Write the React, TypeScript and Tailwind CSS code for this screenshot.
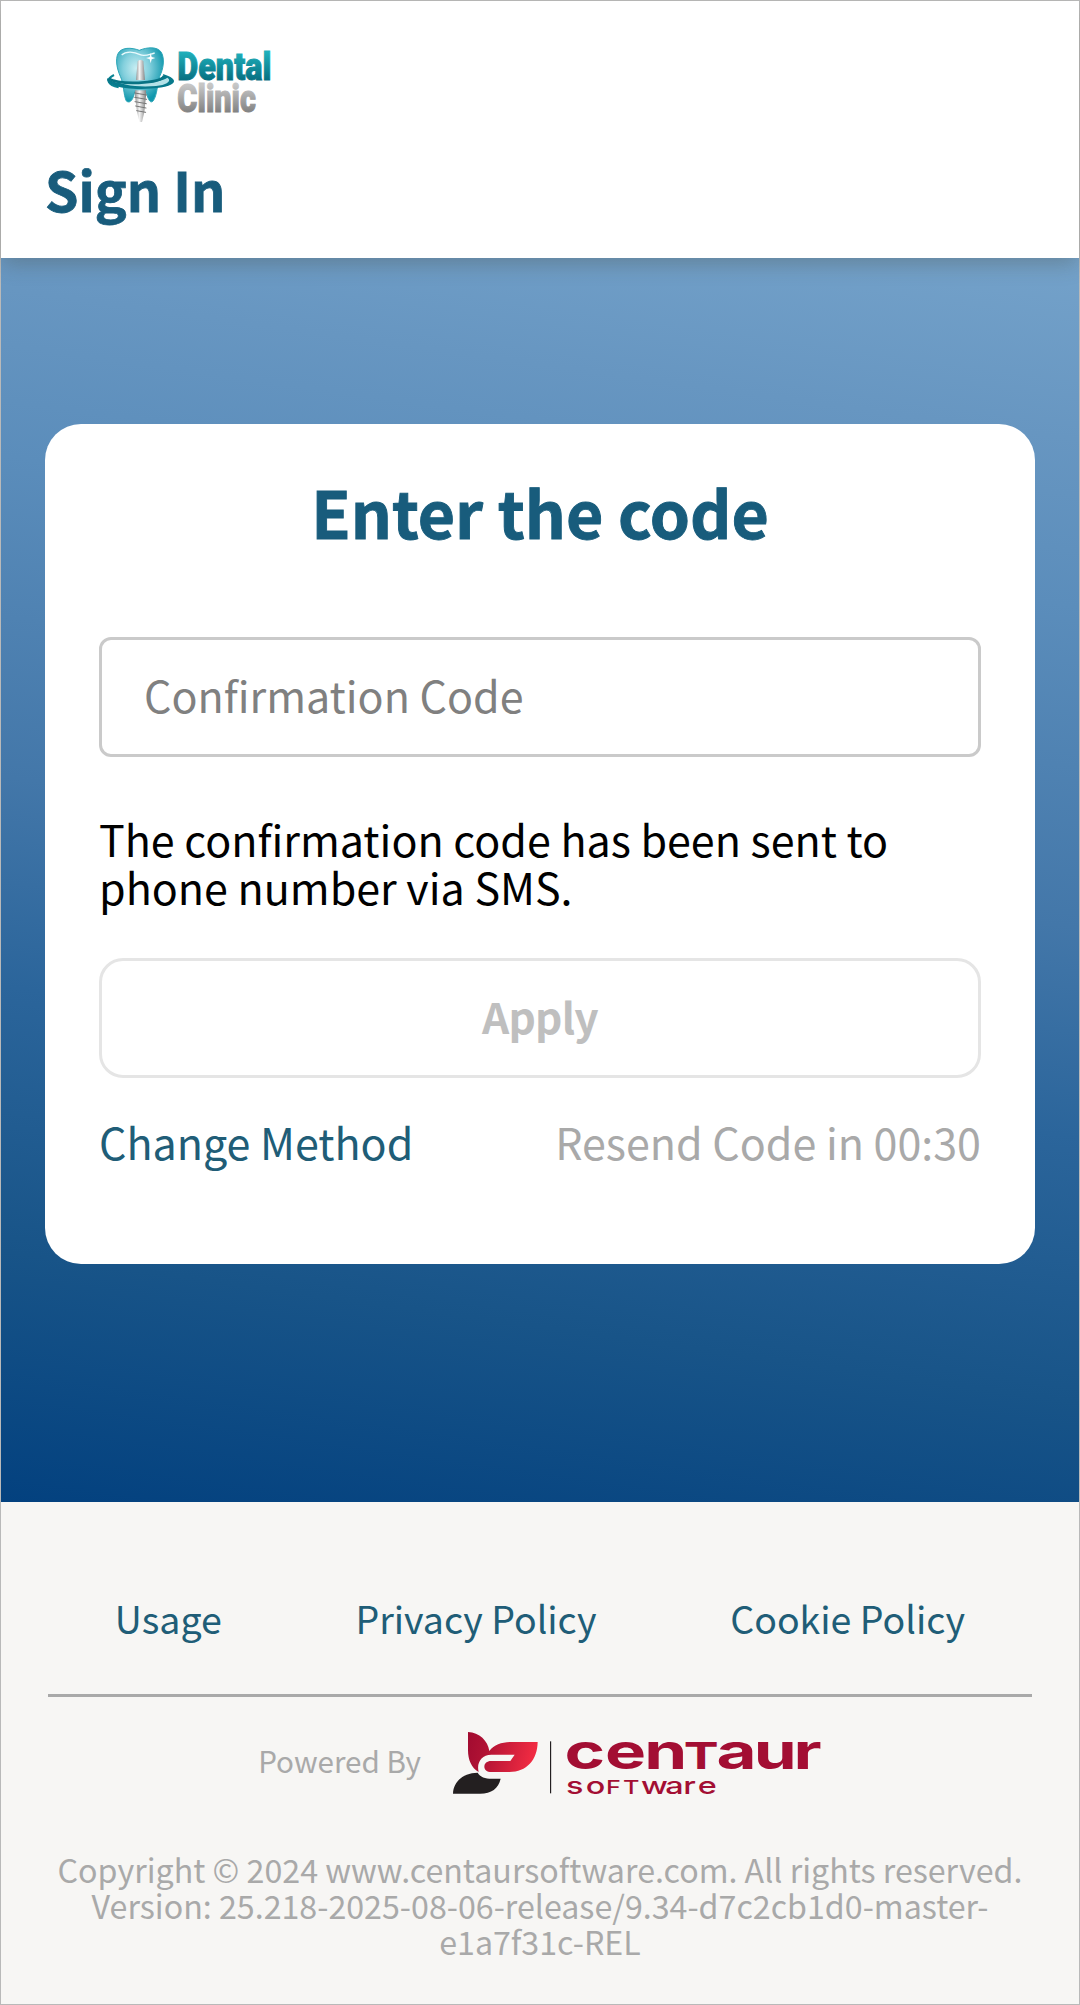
import React, { useState } from 'react';

const FOOTER_LINKS = ['Usage', 'Privacy Policy', 'Cookie Policy'];

function ClinicLogo() {
  return (
    <svg className="block w-[165px] h-[76px] overflow-visible" viewBox="48 52 495 228" role="img" aria-label="Dental Clinic">
      <defs>
        <linearGradient id="teal" x1="0" y1="0" x2="0" y2="1">
          <stop offset="0.2" stopColor="#1fb0bb" />
          <stop offset="0.85" stopColor="#056a7c" />
        </linearGradient>
        <linearGradient id="silver" x1="0" y1="0" x2="0" y2="1">
          <stop offset="0.2" stopColor="#c6c6c6" />
          <stop offset="0.85" stopColor="#7d7d7d" />
        </linearGradient>
        <radialGradient id="tooth" cx="0.42" cy="0.38" r="0.62">
          <stop offset="0" stopColor="#c9eef3" />
          <stop offset="0.45" stopColor="#84d0dd" />
          <stop offset="1" stopColor="#1097ad" />
        </radialGradient>
        <linearGradient id="screw" x1="0" y1="0" x2="1" y2="0">
          <stop offset="0" stopColor="#959595" />
          <stop offset="0.4" stopColor="#f4f4f4" />
          <stop offset="1" stopColor="#858585" />
        </linearGradient>
      </defs>
      <path d="M72 136 C44 150 54 166 86 173" fill="none" stroke="#0c8594" strokeWidth="6" />
      <path
        d="M84 72 C94 52 124 53 148 62 C172 52 202 50 214 68 C225 88 220 118 209 140 C202 165 201 197 190 213 C180 225 173 205 168 185 L134 185 C131 207 121 224 109 214 C100 196 102 162 91 140 C80 116 76 88 84 72 Z"
        fill="url(#tooth)"
        stroke="#2aa5b7"
        strokeWidth="3"
      />
      <path d="M95 76 C108 64 132 66 150 75 C164 82 178 74 194 70" fill="none" stroke="#e9fafc" strokeWidth="4" />
      <path d="M182 70 l3 12 l11 3 l-11 4 l-3 12 l-3 -12 l-11 -4 l11 -3 Z" fill="#fff" />
      <path
        d="M52 145 C62 161 105 161 146 160 C194 159 225 151 219 133 C242 140 260 151 249 161 C228 181 110 184 68 166 C54 160 49 153 52 145 Z"
        fill="#087a8c"
      />
      <path d="M68 145 C91 165 205 164 232 144 C248 155 226 166 198 169 C151 173 86 169 68 145 Z" fill="#b4e2e8" />
      <path d="M56 147 C86 166 211 164 222 139" fill="none" stroke="#087384" strokeWidth="8" />
      <path d="M143 94 Q152 88 160 94 L165 151 H138 Z" fill="url(#screw)" />
      <path d="M135 182 H168 L168 200 L163 248 L156 277 L149 277 L141 248 L135 200 Z" fill="url(#screw)" />
      <path
        d="M134 190 l36 6 M134 203 l36 6 M135 216 l34 6 M137 229 l31 6 M140 243 l27 5"
        stroke="#777"
        strokeWidth="3"
        strokeLinecap="round"
      />
      <g fontFamily="Roboto, sans-serif" fontWeight="900">
        <text x="262" y="150" fontSize="119" textLength="282" lengthAdjust="spacingAndGlyphs" fill="url(#teal)" stroke="url(#teal)" strokeWidth="3">
          Dental
        </text>
        <text x="262" y="247" fontSize="115" textLength="236" lengthAdjust="spacingAndGlyphs" fill="url(#silver)" stroke="url(#silver)" strokeWidth="3">
          Clinic
        </text>
      </g>
    </svg>
  );
}

function CentaurLogo() {
  return (
    <svg className="block w-[369px] h-[63px] overflow-visible" viewBox="69 66 1107 189" role="img" aria-label="Centaur Software">
      <defs>
        <linearGradient id="petal" x1="0" y1="0" x2="1" y2="0.15">
          <stop offset="0" stopColor="#a10b30" />
          <stop offset="0.3" stopColor="#b01234" />
          <stop offset="1" stopColor="#f02b42" />
        </linearGradient>
      </defs>
      <path
        d="M114 66 C148 67 174 93 178 123 C192 104 214 97 240 96 H323 C322 150 290 186 238 186 H185 C170 186 163 179 163 170 C163 160 171 153 183 153 H241 L254 134 H184 C154 135 139 158 146 186 C124 173 114 150 114 120 Z"
        fill="url(#petal)"
      />
      <path d="M69 251 C70 216 99 188 143 188 C150 201 166 206 185 206 H212 C205 235 185 251 150 251 Z" fill="#231f20" />
      <rect x="360" y="94" width="3.5" height="156" fill="#231f20" />
      <g fontFamily="Inter, sans-serif" fill="#a30e33">
        <text transform="translate(0 177) scale(1.4 1)" fontSize="148" fontWeight="700">
          <tspan x="288 375 459">cen</tspan>
          <tspan x="544" fontSize="112">T</tspan>
          <tspan x="614 694 779">aur</tspan>
        </text>
        <text transform="translate(0 251) scale(1.35 1)" fontSize="72" fontWeight="500">
          <tspan x="302 346">so</tspan>
          <tspan x="391 429" fontSize="56">FT</tspan>
          <tspan x="469 523 563 595">ware</tspan>
        </text>
      </g>
    </svg>
  );
}

export default function App() {
  const [code, setCode] = useState('');

  return (
    <div className="w-[1080px] h-[2005px] flex flex-col border border-[#b9b9b9] bg-white font-['Noto_Sans_CJK_JP',sans-serif]">
      <header className="relative h-[257px] shrink-0 bg-white pl-11 pt-[46px] shadow-[0_9px_18px_-2px_rgba(70,70,50,0.28)]">
        <div className="ml-[61px]">
          <ClinicLogo />
        </div>
        <h1 className="mt-9 text-[53.6px] leading-[60px] font-bold text-[#185c7c] [-webkit-text-stroke:0.8px_#185c7c]">
          Sign In
        </h1>
      </header>

      <main className="h-[1244px] shrink-0 px-11 pt-[166px] bg-[linear-gradient(8deg,#03417f_0%,#185488_18%,#2b659b_37%,#4377a9_52%,#5b8dbb_75%,#6796c1_87%,#74a2ca_100%)]">
        <section className="h-[840px] rounded-[36px] bg-white px-[54px] pt-[51px]">
          <h2 className="text-center text-[64.3px] leading-[72px] font-bold text-[#185c7c] [-webkit-text-stroke:0.9px_#185c7c]">
            Enter the code
          </h2>
          <input
            value={code}
            onChange={(e) => setCode(e.target.value)}
            placeholder="Confirmation Code"
            className="mt-[90px] block h-[120px] w-full rounded-xl border-[3px] border-[#cacaca] px-[42px] pb-[7px] text-[43px] text-black placeholder:text-[#808080]"
          />
          <p className="mt-[57px] text-[43px] leading-[48px] text-black">
            The confirmation code has been sent to phone number via SMS.
          </p>
          <button
            disabled={!code}
            className="mt-12 block h-[120px] w-full rounded-3xl border-[3px] border-[#e5e5e5] pb-[5px] text-[42.5px] leading-[48px] font-bold tracking-[-0.8px] text-[#bfbfbf]"
          >
            Apply
          </button>
          <div className="mt-[39px] flex justify-between text-[43px] leading-[48px]">
            <a className="text-[#205d77]">Change Method</a>
            <span className="text-[#a9a9a9]">Resend Code in 00:30</span>
          </div>
        </section>
      </main>

      <footer className="flex-1 bg-[#f7f6f4] px-[47px] pt-[92px] text-[#a9a9a9]">
        <nav className="flex h-[103px] justify-around border-b-[3px] border-[#a9a9a9] text-[37.5px] leading-[48px] text-[#205d77]">
          {FOOTER_LINKS.map((link) => (
            <a key={link}>{link}</a>
          ))}
        </nav>
        <div className="mt-[35px] flex items-center justify-center gap-8">
          <span className="pb-[5px] text-[29.6px] leading-[36px]">Powered By</span>
          <CentaurLogo />
        </div>
        <p className="mt-[56px] text-center text-[32.2px] leading-[36px]">
          Copyright © 2024 www.centaursoftware.com. All rights reserved.
          <br />
          Version: 25.218-2025-08-06-release/9.34-d7c2cb1d0-master-
          <br />
          e1a7f31c-REL
        </p>
      </footer>
    </div>
  );
}
